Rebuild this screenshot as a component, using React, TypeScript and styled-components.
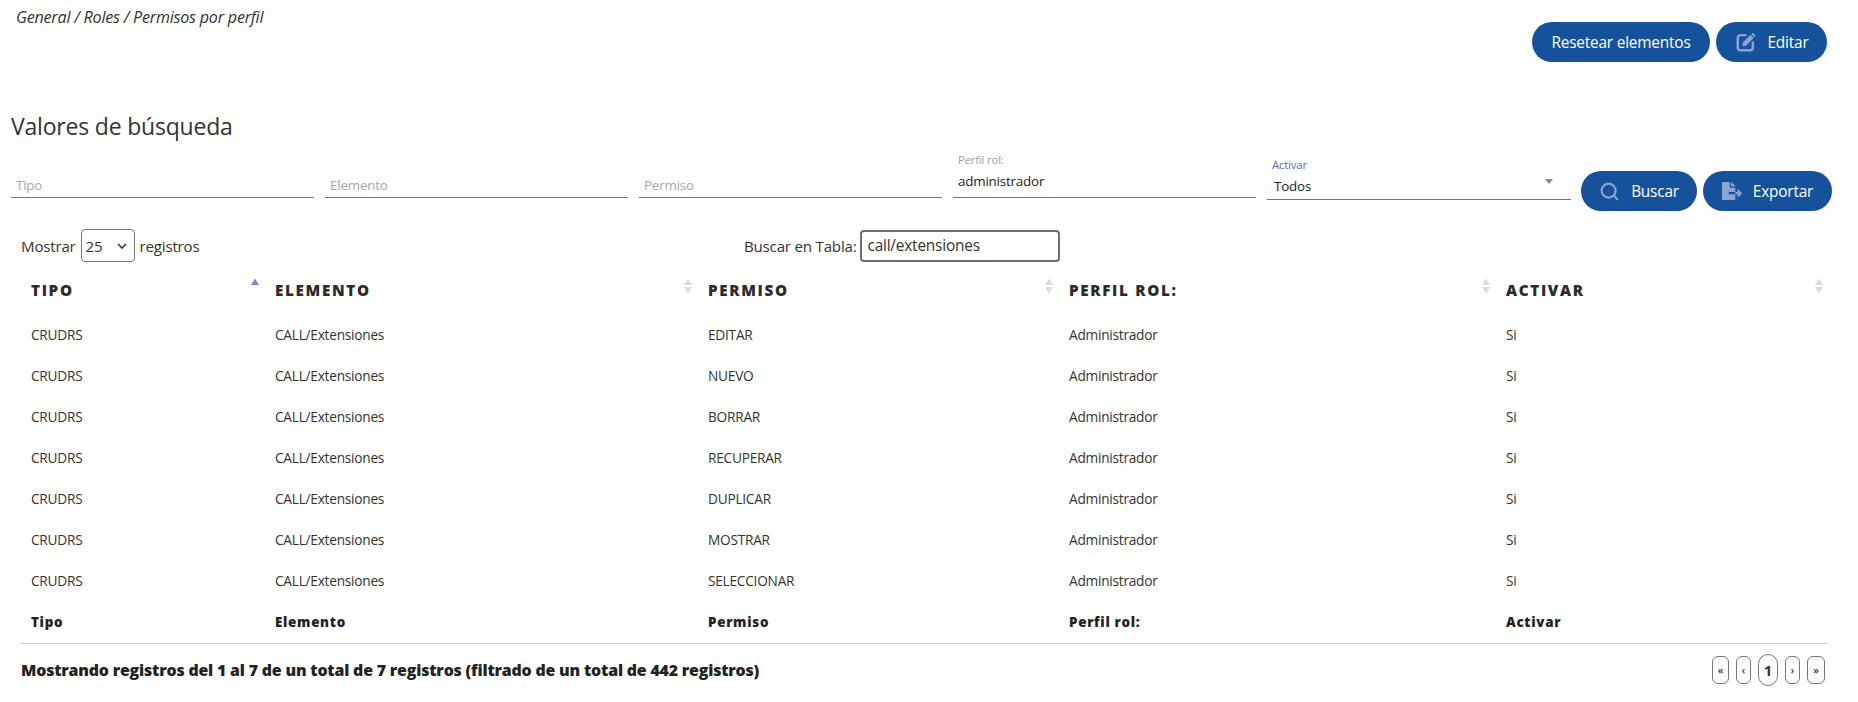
import { createGlobalStyle, styled } from 'styled-components';
import { Search } from 'lucide-react';
import { FaFileExport } from 'react-icons/fa';

const GlobalStyle = createGlobalStyle`
  html, body { margin: 0; padding: 0; background: #fff; }
  body { font-family: "Open Sans", "Noto Sans", sans-serif; color: #212529; }
`;

const Page = styled.div`
  width: 1858px;
  height: 702px;
  overflow: hidden;
  box-sizing: border-box;
`;

const TopBar = styled.div`
  display: flex;
  justify-content: space-between;
  align-items: flex-start;
  padding: 7px 31px 0 16px;
`;

const Breadcrumb = styled.div`
  font-size: 16.1px;
  font-style: italic;
  line-height: 20px;
  letter-spacing: -0.22px;
  color: #333;
`;

const TopActions = styled.div`
  display: flex;
  gap: 6px;
  margin-top: 15px;
`;

const PillButton = styled.button<{ $width: number }>`
  display: flex;
  align-items: center;
  justify-content: center;
  gap: 11px;
  height: 40px;
  width: ${(p) => p.$width}px;
  padding: 0;
  border: none;
  border-radius: 20px;
  background: #16529c;
  color: #fff;
  font-family: inherit;
  font-size: 15.4px;
  white-space: nowrap;
  letter-spacing: -0.2px;
`;

const Title = styled.h2`
  margin: 49px 0 0 11px;
  font-size: 23px;
  font-weight: 400;
  line-height: 30px;
  color: #333;
  letter-spacing: -0.2px;
`;

const SearchRow = styled.div`
  display: flex;
  align-items: flex-end;
  margin-top: 14px;
  padding-left: 11px;
`;

const Field = styled.div`
  width: 303px;
  height: 43px;
  margin-right: 11px;
  box-sizing: border-box;
  border-bottom: 1px solid #757575;
  display: flex;
  flex-direction: column;
  justify-content: flex-end;
  padding: 0 0 2px 5px;
`;

const SelectField = styled(Field)`
  width: 304px;
  margin-right: 10px;
  margin-bottom: -2px;
  height: 45px;
  padding-left: 7px;
  position: relative;
`;

const Placeholder = styled.span`
  font-size: 13.4px;
  line-height: 20px;
  letter-spacing: -0.2px;
  color: #a8a8a8;
`;

const FloatLabel = styled.span<{ $active?: boolean }>`
  font-size: 11.4px;
  line-height: 14px;
  letter-spacing: -0.2px;
  margin-left: ${(p) => (p.$active ? '-2px' : '0')};
  color: ${(p) => (p.$active ? '#5c6bc0' : '#a0a0a0')};
`;

const FieldValue = styled.span<{ $raised?: boolean }>`
  font-size: 13.4px;
  line-height: 20px;
  margin-top: 4px;
  margin-bottom: ${(p) => (p.$raised ? 4 : 1)}px;
  letter-spacing: -0.2px;
  color: #222;
`;

const Caret = styled.span`
  position: absolute;
  right: 18px;
  top: 24px;
  width: 0;
  height: 0;
  border-left: 4px solid transparent;
  border-right: 4px solid transparent;
  border-top: 5px solid #8a8a8a;
`;

const SearchActions = styled.div`
  display: flex;
  gap: 6px;
  margin-bottom: -13px;
`;

const ControlRow = styled.div`
  display: flex;
  align-items: center;
  height: 33px;
  margin-top: 31px;
  padding-left: 21px;
  font-size: 15.1px;
  letter-spacing: -0.2px;
  color: #333;
`;

const LengthBlock = styled.div`
  display: flex;
  align-items: center;
  gap: 5px;
  width: 723px;
`;

const LengthSelect = styled.div`
  width: 54px;
  height: 33px;
  box-sizing: border-box;
  border: 1px solid #767676;
  border-radius: 4px;
  display: flex;
  align-items: center;
  justify-content: space-between;
  padding: 0 7px 0 4px;
`;

const FilterBlock = styled.div`
  display: flex;
  align-items: center;
  gap: 4px;
`;

const FilterBox = styled.div`
  width: 200px;
  height: 32px;
  box-sizing: border-box;
  border: 2px solid #6e6e6e;
  border-radius: 4px;
  padding-left: 5px;
  line-height: 28px;
  font-size: 15.4px;
`;

const Table = styled.table`
  border-collapse: collapse;
  table-layout: fixed;
  width: 1808px;
  margin: 4px 0 0 20px;
`;

const HeadCell = styled.th<{ $w: number }>`
  width: ${(p) => p.$w}px;
  height: 48px;
  padding: 0 0 0 11px;
  box-sizing: border-box;
  text-align: left;
`;

const HeadInner = styled.div`
  display: flex;
  justify-content: space-between;
  align-items: center;
  padding-right: 4px;
  font-size: 15.2px;
  font-weight: 800;
  letter-spacing: 1.68px;
  text-transform: uppercase;
  color: #2b2b2b;
`;

const SortIcon = styled.svg`
  display: block;
  margin-top: -8px;
`;

const BodyCell = styled.td`
  height: 41px;
  padding: 0 0 0 11px;
  font-size: 13.7px;
  letter-spacing: -0.25px;
  color: #333;
`;

const FootCell = styled.td`
  height: 42px;
  padding: 0 0 0 11px;
  font-size: 13.4px;
  font-weight: 800;
  letter-spacing: 0.7px;
  color: #222;
  border-bottom: 1px solid #cfcfcf;
`;

const InfoRow = styled.div`
  display: flex;
  justify-content: space-between;
  align-items: center;
  margin-top: 10px;
  padding: 0 33px 0 21px;
`;

const InfoText = styled.div`
  font-size: 15.9px;
  font-weight: 800;
  letter-spacing: -0.18px;
  color: #222;
`;

const Pager = styled.div`
  display: flex;
  align-items: center;
  gap: 7px;
`;

const PageButton = styled.div<{ $w: number; $current?: boolean }>`
  width: ${(p) => p.$w}px;
  height: ${(p) => (p.$current ? 32 : 28)}px;
  box-sizing: border-box;
  border: 1px solid #767676;
  border-radius: ${(p) => (p.$current ? 10 : 6)}px;
  display: flex;
  align-items: center;
  justify-content: center;
  font-size: ${(p) => (p.$current ? 15 : 10)}px;
  font-weight: ${(p) => (p.$current ? 700 : 600)};
  color: #333;
`;

const IconTint = styled.span`
  display: flex;
  color: #8aa6cf;
`;

const columns = [
  { label: 'Tipo', w: 244, sorted: true },
  { label: 'Elemento', w: 433 },
  { label: 'Permiso', w: 361 },
  { label: 'Perfil rol:', w: 437 },
  { label: 'Activar', w: 333 },
];

const permisos = ['EDITAR', 'NUEVO', 'BORRAR', 'RECUPERAR', 'DUPLICAR', 'MOSTRAR', 'SELECCIONAR'];

const SortMark = ({ sorted }: { sorted?: boolean }) => (
  <SortIcon width="10" height="16" viewBox="0 0 10 16">
    <path d="M5 0.5 L9 7 H1 Z" fill={sorted ? '#7b86e0' : '#dcdcdc'} />
    {!sorted && <path d="M5 15.5 L9 9 H1 Z" fill="#dcdcdc" />}
  </SortIcon>
);

const EditIcon = () => (
  <svg width="22" height="22" viewBox="0 0 24 24">
    <path
      d="M11.5 4.5H6a3 3 0 0 0-3 3V18a3 3 0 0 0 3 3h10.5a3 3 0 0 0 3-3v-5.5"
      fill="none"
      stroke="currentColor"
      strokeWidth="2.7"
      strokeLinecap="round"
    />
    <path d="M8.5 12.6 17 4.1l3.4 3.4-8.5 8.5-3.9.5Z" fill="currentColor" />
    <path d="M18.2 2.9a1.6 1.6 0 0 1 2.3 0l1.1 1.1a1.6 1.6 0 0 1 0 2.3l-.4.4-3.4-3.4Z" fill="currentColor" />
  </svg>
);

export default function App() {
  return (
    <Page>
      <GlobalStyle />
      <TopBar>
        <Breadcrumb>General / Roles / Permisos por perfil</Breadcrumb>
        <TopActions>
          <PillButton $width={178}>Resetear elementos</PillButton>
          <PillButton $width={111}>
            <IconTint><EditIcon /></IconTint>
            Editar
          </PillButton>
        </TopActions>
      </TopBar>

      <Title>Valores de búsqueda</Title>

      <SearchRow>
        <Field><Placeholder>Tipo</Placeholder></Field>
        <Field><Placeholder>Elemento</Placeholder></Field>
        <Field><Placeholder>Permiso</Placeholder></Field>
        <Field>
          <FloatLabel>Perfil rol:</FloatLabel>
          <FieldValue $raised>administrador</FieldValue>
        </Field>
        <SelectField>
          <FloatLabel $active>Activar</FloatLabel>
          <FieldValue>Todos</FieldValue>
          <Caret />
        </SelectField>
        <SearchActions>
          <PillButton $width={116}>
            <IconTint><Search size={21} strokeWidth={2.4} /></IconTint>
            Buscar
          </PillButton>
          <PillButton $width={129}>
            <IconTint><FaFileExport size={20} /></IconTint>
            Exportar
          </PillButton>
        </SearchActions>
      </SearchRow>

      <ControlRow>
        <LengthBlock>
          Mostrar
          <LengthSelect>
            25
            <svg width="10" height="6" viewBox="0 0 10 6" fill="none" stroke="#333" strokeWidth="1.6">
              <path d="M1 1l4 4 4-4" />
            </svg>
          </LengthSelect>
          registros
        </LengthBlock>
        <FilterBlock>
          Buscar en Tabla:
          <FilterBox>call/extensiones</FilterBox>
        </FilterBlock>
      </ControlRow>

      <Table>
        <thead>
          <tr>
            {columns.map((c) => (
              <HeadCell key={c.label} $w={c.w}>
                <HeadInner>
                  {c.label}
                  <SortMark sorted={c.sorted} />
                </HeadInner>
              </HeadCell>
            ))}
          </tr>
        </thead>
        <tbody>
          {permisos.map((p) => (
            <tr key={p}>
              <BodyCell>CRUDRS</BodyCell>
              <BodyCell>CALL/Extensiones</BodyCell>
              <BodyCell>{p}</BodyCell>
              <BodyCell>Administrador</BodyCell>
              <BodyCell>Si</BodyCell>
            </tr>
          ))}
        </tbody>
        <tfoot>
          <tr>
            {columns.map((c) => (
              <FootCell key={c.label}>{c.label}</FootCell>
            ))}
          </tr>
        </tfoot>
      </Table>

      <InfoRow>
        <InfoText>Mostrando registros del 1 al 7 de un total de 7 registros (filtrado de un total de 442 registros)</InfoText>
        <Pager>
          <PageButton $w={17}>«</PageButton>
          <PageButton $w={15}>‹</PageButton>
          <PageButton $w={20} $current>1</PageButton>
          <PageButton $w={15}>›</PageButton>
          <PageButton $w={18}>»</PageButton>
        </Pager>
      </InfoRow>
    </Page>
  );
}
